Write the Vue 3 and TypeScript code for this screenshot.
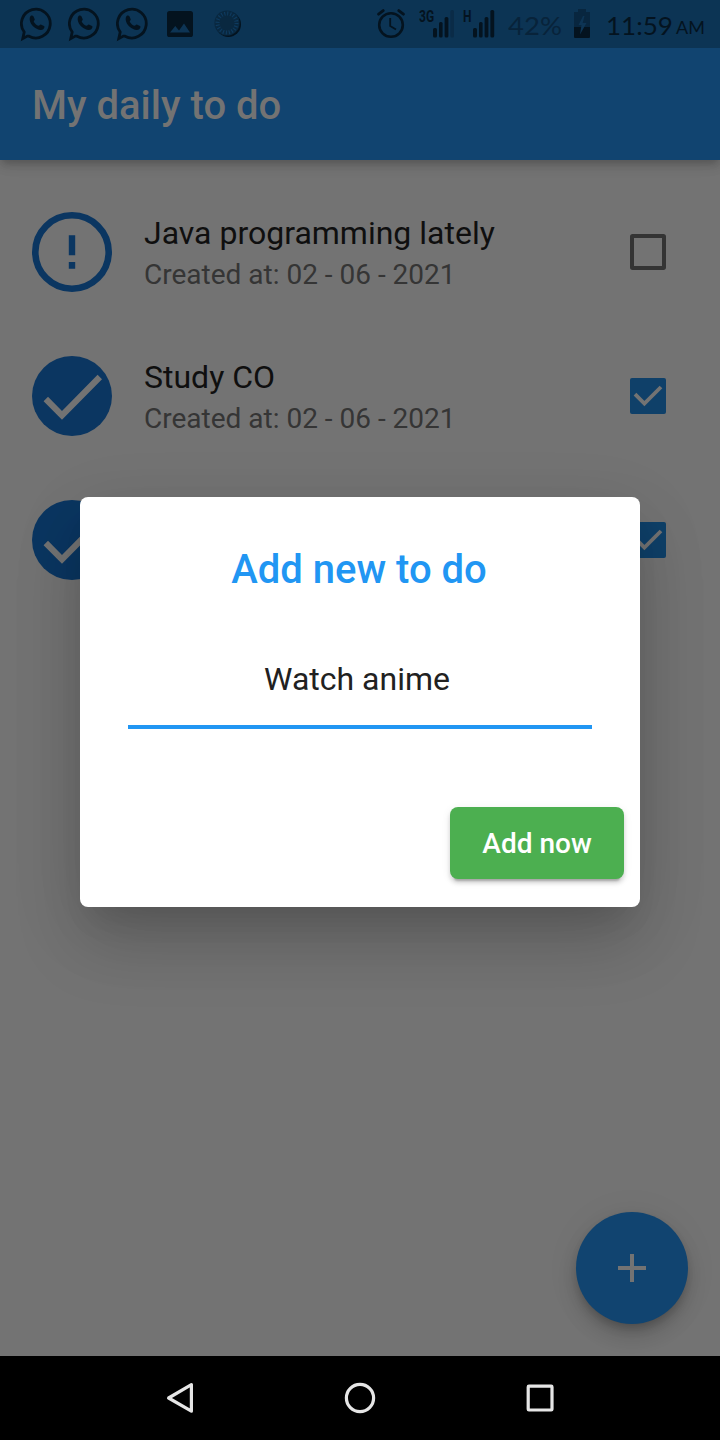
<script setup lang="ts">
import { ref } from 'vue'

interface Todo {
  title: string
  created: string
  done: boolean
}

const todos = ref<Todo[]>([
  { title: 'Java programming lately', created: '02 - 06 - 2021', done: false },
  { title: 'Study CO', created: '02 - 06 - 2021', done: true },
  { title: '', created: '', done: true },
])
const draft = ref<string>('Watch anime')
</script>

<template>
  <div class="screen">
    <header class="status">
      <div class="notifications">
        <svg v-for="n in 3" :key="n" class="chat" width="34" height="36" viewBox="0 0 34 36">
          <path d="M7.3 30.1 L2.8 32.6 L4.2 26 A14.4 14.4 0 1 1 9 30.2 Z" fill="none" stroke="#04131f" stroke-width="2.8" stroke-linejoin="miter" />
          <path d="M10.6 9.9c1-.8 2.3-.6 2.8.4l1.3 2.9c.3.9-1.2 1.8-.9 2.5.9 1.9 2.6 3.4 4.6 4.1.8.2 1.6-1.5 2.4-1.3l3.2 1.6c.9.5.4 2.3-.7 3.1-4.4 2.8-13.2-3.6-13.6-9.5 0-1.6.1-3 .9-3.8z" fill="#04131f" />
        </svg>
        <svg class="photo" width="26" height="26" viewBox="0 0 26 26">
          <rect width="26" height="26" rx="2.6" fill="#04131f" />
          <path d="M3 21.5 8.3 15 12 19.4 17 12.5 23 21.5Z" fill="#0d3454" />
        </svg>
        <svg class="disc" width="28" height="28" viewBox="0 0 28 28">
          <circle cx="14.4" cy="14.4" r="12.6" fill="#04131f" />
          <circle cx="13" cy="13" r="12.6" fill="#092840" />
          <circle cx="13" cy="13" r="9.5" fill="none" stroke="#0e3b60" stroke-width="4" stroke-dasharray="1.1 1.88" />
        </svg>
      </div>
      <div class="system">
        <svg class="alarm" width="28" height="30" viewBox="0 0 28 30" fill="none" stroke="#04131f">
          <circle cx="14" cy="16" r="11.8" stroke-width="2.6" />
          <path d="M13.2 9v8l5.8 3.6" stroke-width="1.8" />
          <path d="M1.6 5.2 6.2 1.6M26.4 5.2 21.8 1.6" stroke-width="2.8" stroke-linecap="round" />
        </svg>
        <div class="signal">
          <span class="net">3G</span>
          <svg width="22" height="28" viewBox="0 0 22 28">
            <rect x="0" y="18" width="4" height="9.5" rx="1.5" fill="#04131f" />
            <rect x="6" y="12" width="3.6" height="15.5" rx="1.5" fill="#04131f" />
            <rect x="11.6" y="7" width="3.8" height="20.5" rx="1.5" fill="#04131f" />
            <rect x="17.4" y="0" width="3.6" height="27.5" rx="1.5" fill="#0a2b47" />
          </svg>
        </div>
        <div class="signal second">
          <span class="net">H</span>
          <svg width="22" height="28" viewBox="0 0 22 28">
            <rect x="0" y="18" width="4" height="9.5" rx="1.5" fill="#04131f" />
            <rect x="6" y="12" width="3.6" height="15.5" rx="1.5" fill="#04131f" />
            <rect x="11.6" y="7" width="3.8" height="20.5" rx="1.5" fill="#04131f" />
            <rect x="17.4" y="0" width="3.8" height="27.5" rx="1.5" fill="#04131f" />
          </svg>
        </div>
        <span class="percent">42%</span>
        <svg class="battery" width="16" height="29" viewBox="0 0 16 29">
          <path d="M4 0h8v3h4v15H0V3h4z" fill="#08263f" />
          <path d="M0 18h16v10q0 1-1 1H1q-1 0-1-1z" fill="#04131f" />
          <path d="M9 7 4.5 16H7.5L6 25.5 12.5 14H8.7L10.5 7Z" fill="#0d3454" />
        </svg>
        <span class="time">11:59</span>
        <span class="ampm">AM</span>
      </div>
    </header>

    <div class="appbar"><h1>My daily to do</h1></div>

    <main class="list">
      <div v-for="(todo, i) in todos" :key="i" class="row">
        <svg v-if="todo.done" class="state" viewBox="0 0 80 80">
          <circle cx="40" cy="40" r="40" fill="#0b3661" />
          <path d="M13.8 43 30 59.4 67.8 21" fill="none" stroke="#737373" stroke-width="6.2" />
        </svg>
        <svg v-else class="state" viewBox="0 0 80 80">
          <circle cx="40" cy="40" r="36.7" fill="none" stroke="#0b3661" stroke-width="6.6" />
          <path d="M36.8 23.3h6.4v20h-6.4zM36.8 50h6.4v6.7h-6.4z" fill="#0b3661" />
        </svg>
        <div class="text">
          <template v-if="todo.title">
            <div class="name">{{ todo.title }}</div>
            <div class="date">Created at: {{ todo.created }}</div>
          </template>
        </div>
        <svg v-if="todo.done" class="check" viewBox="0 0 36 36">
          <rect width="36" height="36" rx="2" fill="#0f4069" />
          <path d="M5 16.2 14.4 25.6 31 9" fill="none" stroke="#737373" stroke-width="3.8" />
        </svg>
        <svg v-else class="check" viewBox="0 0 36 36">
          <rect x="2" y="2" width="32" height="32" rx="0.7" fill="none" stroke="#343434" stroke-width="4" />
        </svg>
      </div>
    </main>

    <button class="fab" aria-label="Add">
      <svg width="28" height="28" viewBox="0 0 28 28"><path d="M12 0h4v12h12v4H16v12h-4V16H0v-4h12z" fill="#737373" /></svg>
    </button>

    <nav class="navbar">
      <svg viewBox="0 0 36 36"><path d="M29.4 4.6V31.2L6.6 18Z" /></svg>
      <svg viewBox="0 0 36 36"><circle cx="18" cy="18" r="13.6" /></svg>
      <svg viewBox="0 0 36 36"><rect x="6.2" y="6.2" width="23.8" height="23.8" rx="0.8" /></svg>
    </nav>

    <section class="dialog" role="dialog">
      <h2>Add new to do</h2>
      <div class="field">{{ draft }}</div>
      <button class="add">Add now</button>
    </section>
  </div>
</template>

<style>
body { margin: 0; }
</style>

<style scoped>
.screen {
  position: relative;
  display: flex;
  flex-direction: column;
  width: 720px;
  height: 1440px;
  overflow: hidden;
  background: #737373;
  font-family: Roboto, "Liberation Sans", sans-serif;
}
svg { display: block; flex: none; }
h1, h2 { margin: 0; font-weight: 500; }
button { border: 0; padding: 0; font-family: inherit; }
.status {
  display: flex;
  justify-content: space-between;
  height: 48px;
  background: #0c3454;
  color: #04131f;
  font-family: Lato, sans-serif;
}
.notifications, .system { display: flex; align-items: flex-start; }
.notifications { padding-left: 20px; }
.chat { margin: 6px 14px 0 0; }
.photo { margin: 11px 21px 0 3px; }
.disc { margin-top: 10px; }
.system { padding-right: 15px; }
.alarm { margin: 9px 14px 0 0; }
.signal { display: flex; margin-top: 10px; }
.signal svg { margin-left: -2px; }
.second { margin-left: 8px; }
.net {
  width: 16px;
  font: 700 16px/14px Roboto, sans-serif;
  transform: scaleX(0.75);
  transform-origin: left;
}
.second .net { width: 12px; }
.percent, .time, .ampm { font-size: 25px; line-height: 32px; margin-top: 9px; transform-origin: left; }
.percent { width: 56px; margin-left: 13px; transform: scaleX(1.1); color: #08233a; }
.battery { margin: 9px 16px 0 10px; }
.time { width: 66px; transform: scaleX(1.04); }
.ampm { width: 29px; margin-left: 4px; font-size: 18px; line-height: 37px; }
.appbar {
  display: flex;
  align-items: center;
  box-sizing: border-box;
  height: 112px;
  padding: 4px 0 0 32px;
  background: #114470;
  box-shadow: 0 4px 8px -2px rgba(0, 0, 0, 0.2), 0 8px 10px rgba(0, 0, 0, 0.07), 0 2px 20px rgba(0, 0, 0, 0.06);
  clip-path: inset(0 0 -30px 0);
}
h1 { font-size: 40px; line-height: 48px; color: #737373; }
.list { flex: 1; padding-top: 20px; }
.row {
  display: flex;
  align-items: center;
  box-sizing: border-box;
  height: 144px;
  padding: 0 54px 0 32px;
}
.state { width: 80px; height: 80px; }
.text { flex: 1; margin: 3px 0 0 32px; }
.name { height: 42px; font-size: 32px; line-height: 41px; color: #0f0f0f; }
.date { height: 40px; font-size: 28px; line-height: 40px; color: #353535; }
.check { width: 36px; height: 36px; }
.fab {
  position: absolute;
  right: 32px;
  top: 1212px;
  display: flex;
  align-items: center;
  justify-content: center;
  width: 112px;
  height: 112px;
  border-radius: 50%;
  background: #114470;
  box-shadow: 0 6px 10px -2px rgba(0, 0, 0, 0.2), 0 12px 20px rgba(0, 0, 0, 0.14), 0 2px 36px rgba(0, 0, 0, 0.06);
}
.navbar {
  position: relative;
  display: flex;
  align-items: center;
  justify-content: center;
  gap: 144px;
  height: 84px;
  background: #000;
}
.navbar svg { width: 36px; height: 36px; fill: none; stroke: #e6e6e6; stroke-width: 3.2; stroke-linejoin: round; }
.dialog {
  position: absolute;
  left: 80px;
  top: 497px;
  display: flex;
  flex-direction: column;
  box-sizing: border-box;
  width: 560px;
  height: 410px;
  padding: 49px 48px 28px;
  border-radius: 8px;
  background: #fff;
  box-shadow: 0 22px 30px -14px rgba(0, 0, 0, 0.1), 0 36px 68px 0 rgba(0, 0, 0, 0.15), 0 18px 76px 2px rgba(0, 0, 0, 0.08);
}
h2 { padding-right: 2px; font-size: 40px; line-height: 48px; text-align: center; color: #2196f3; }
.field {
  box-sizing: border-box;
  height: 100px;
  margin-top: 35px;
  padding: 30px 6px 0 0;
  border-bottom: 4px solid #2196f3;
  font-size: 32px;
  line-height: 40px;
  text-align: center;
  color: #212121;
}
.add {
  align-self: flex-end;
  width: 174px;
  height: 72px;
  margin: auto -32px 0 0;
  border-radius: 8px;
  background: #4caf50;
  color: #fff;
  font-size: 28px;
  font-weight: 500;
  box-shadow: 0 6px 2px -4px rgba(0, 0, 0, 0.2), 0 4px 4px rgba(0, 0, 0, 0.14), 0 2px 10px rgba(0, 0, 0, 0.08);
}
</style>
